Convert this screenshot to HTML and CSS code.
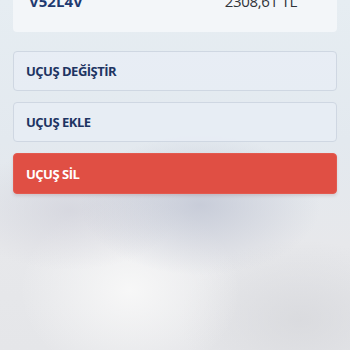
FILE: index.html
```html
<!DOCTYPE html>
<html lang="tr">
<head>
<meta charset="utf-8">
<link rel="stylesheet" href="styles.css">
</head>
<body>
<div class="page">
  <div class="card">
    <span class="code">V52L4V</span>
    <span class="price">2308,61 TL</span>
  </div>
  <div class="actions">
    <button class="btn">UÇUŞ DEĞİŞTİR</button>
    <button class="btn">UÇUŞ EKLE</button>
    <button class="btn danger">UÇUŞ SİL</button>
  </div>
</div>
</body>
</html>
```
FILE: styles.css
```css
html, body {
  margin: 0;
  padding: 0;
}
body {
  width: 350px;
  height: 350px;
  overflow: hidden;
  font-family: "Open Sans", "Noto Sans", sans-serif;
  background:
    radial-gradient(ellipse 120px 70px at 200px 205px, rgba(190,195,210,0.75), rgba(190,195,210,0) 100%),
    radial-gradient(ellipse 110px 60px at 70px 210px, rgba(205,205,215,0.6), rgba(205,205,215,0) 100%),
    radial-gradient(ellipse 110px 90px at 130px 290px, rgba(248,248,248,0.95), rgba(248,248,248,0) 100%),
    radial-gradient(ellipse 120px 80px at 300px 320px, rgba(215,216,220,0.8), rgba(215,216,220,0) 100%),
    linear-gradient(180deg, #e6edf2 0%, #e3e9ef 40%, #e7e8eb 70%, #e5e6e9 100%);
}
.page {
  display: flex;
  flex-direction: column;
}
.card {
  margin: -20px 13px 0;
  height: 52px;
  box-sizing: border-box;
  padding: 0 40px 21px 16px;
  display: flex;
  justify-content: space-between;
  align-items: flex-end;
  background: #f3f6f9;
  border-radius: 4px;
  font-size: 15px;
  line-height: 20px;
}
.code {
  font-weight: 700;
  color: #1e3a70;
}
.price {
  color: #2f3338;
  letter-spacing: -0.3px;
}
.actions {
  margin: 19px 13px 0;
  display: flex;
  flex-direction: column;
  gap: 11px;
}
.btn {
  height: 40px;
  box-sizing: border-box;
  border: 1px solid #cfd7e2;
  border-radius: 4px;
  background: rgba(232, 238, 245, 0.75);
  text-align: left;
  padding: 0 0 0 12px;
  font-family: "Open Sans", "Noto Sans", sans-serif;
  font-weight: 700;
  font-size: 13px;
  letter-spacing: -0.5px;
  color: #1d3462;
}
.btn.danger {
  height: 41px;
  background: #e04f44;
  border-color: #e35a4f;
  color: #ffffff;
  box-shadow: 0 2px 3px rgba(120, 60, 60, 0.15);
}
```
